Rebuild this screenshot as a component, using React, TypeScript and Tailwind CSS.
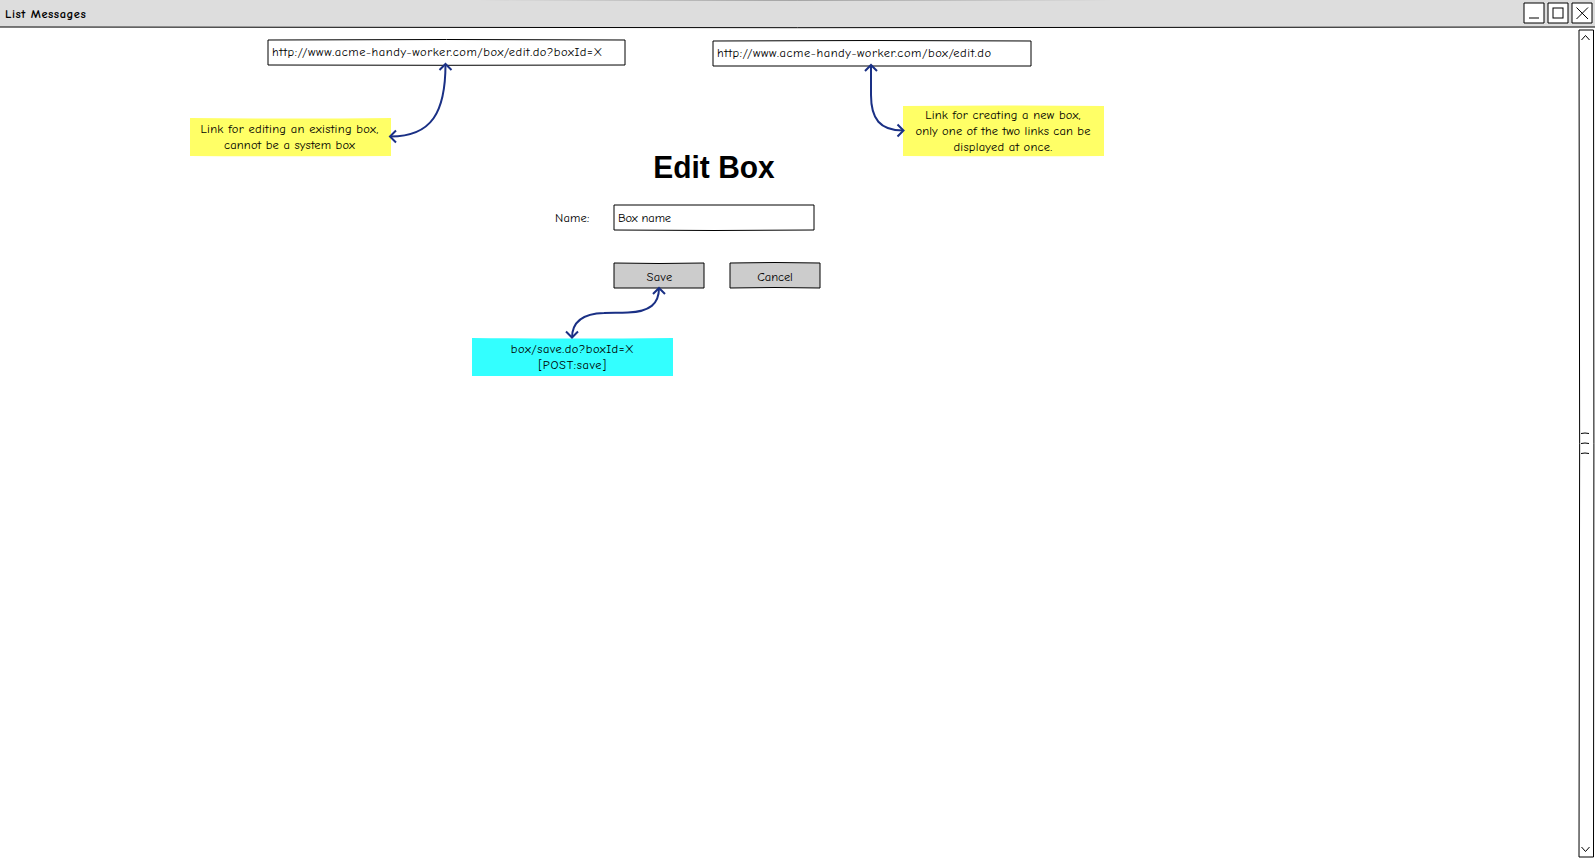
import type { ReactNode } from "react";

type FrameProps = {
  w: number;
  h: number;
  top?: number;
  bottom?: number;
  fill?: string;
  className?: string;
  stroke?: string;
  children?: ReactNode;
};

/* A box with a hand-drawn outline; top and bottom give how far each edge bows. */
function Frame({ w, h, top = 0, bottom = 0, fill = "#fff", stroke = "#000", className = "", children }: FrameProps) {
  return (
    <div className={`relative shrink-0 ${className}`} style={{ width: w, height: h }}>
      <svg className="absolute inset-0 overflow-visible" width={w} height={h}>
        <path d={`M0 0Q${w / 2} ${top * 2} ${w} 0V${h}Q${w / 2} ${h + bottom * 2} 0 ${h}Z`} fill={fill} stroke={stroke} />
      </svg>
      {children}
    </div>
  );
}

function TitleBar() {
  return (
    <header className="relative flex h-[27px] items-start justify-between bg-[#ddd] pr-[3px] pl-[5px]">
      <h1 className="pt-[5px] leading-[18px] font-bold tracking-[0.5px]">List Messages</h1>
      <svg className="absolute top-0 left-0 overflow-visible" width="1595" height="28">
        <path d="M0 27Q797 28.4 1595 27" fill="none" stroke="#000" />
        <path d="M0 -0.9Q797 0.4 1595 -0.9" fill="none" stroke="#000" />
      </svg>
      <div className="relative flex gap-1 pt-[3px]">
        <Frame w={20} h={20}>
          <svg className="relative" width="20" height="20" fill="none" stroke="#000"><path d="M5 15H15" /></svg>
        </Frame>
        <Frame w={20} h={20}>
          <svg className="relative" width="20" height="20" fill="none" stroke="#000"><rect x="5" y="5" width="10" height="10" /></svg>
        </Frame>
        <Frame w={20} h={20}>
          <svg className="relative" width="20" height="20" fill="none" stroke="#000"><path d="M4.500 4.500L16 16M16 4.500L4.500 16" /></svg>
        </Frame>
      </div>
    </header>
  );
}

function ScrollBar() {
  return (
    <svg className="absolute top-[3px] right-0 overflow-visible" width="16" height="828" fill="none" stroke="#000">
      <path d="M0 0H14.500Q15.300 414 14.500 827H0Q1.300 414 0 0Z" />
      <path d="M2.500 10L6.500 5.500L10.500 10M2.500 817L6.500 821.500L10.500 817" />
      <path d="M2 403.500Q6 402.500 10 403.500M2 413.500Q6 412.500 10 413.500M2 423.500Q6 422.500 10 423.500" />
    </svg>
  );
}

function Connectors() {
  return (
    <svg className="pointer-events-none absolute top-0 left-0 overflow-visible" width="1120" height="360" fill="none" stroke="#1a3085" strokeWidth="2">
      <path d="M445.500 37C445.500 85 432 109.500 390.500 109.500" />
      <path d="M439.500 43L445.500 37L451.500 43M396 103.500L390 109.500L396 115.500" />
      <path d="M871 38V68C871 92 880 103.500 903 103.500" />
      <path d="M865 44L871 38L877 44M897.500 97.500L903.500 103.500L897.500 109.500" />
      <path d="M659 261C659 277 650 284.500 628 285.500C618 286 612 285.500 604 286C584 286.500 572 294 572 311" />
      <path d="M653 267L659 261L665 267M566 304.500L572 310.500L578 304.500" />
    </svg>
  );
}

export default function App() {
  return (
    <div className="h-[859px] w-[1595px] overflow-hidden bg-white font-['Comic_Sans_MS','Comic_Neue','Open_Sans',sans-serif] text-[12.5px] leading-4 text-black">
      <TitleBar />
      <main className="relative h-[832px]">
        <div className="flex pt-[13px] pl-[268px]">
          <Frame w={357} h={25} top={-0.5} bottom={0.3}>
            <p className="relative pt-1 pl-1 tracking-[0.56px] whitespace-nowrap">http://www.acme-handy-worker.com/box/edit.do?boxId=X</p>
          </Frame>
          <Frame w={318} h={25} top={-0.5} className="mt-px ml-[88px]">
            <p className="relative pt-1 pl-1 tracking-[0.55px] whitespace-nowrap">http://www.acme-handy-worker.com/box/edit.do</p>
          </Frame>
        </div>

        <section className="ml-[555px] w-[270px] pt-[81px]">
          <h2 className="ml-[59px] w-[200px] scale-x-[0.935] text-center font-['Liberation_Sans',Arial,sans-serif] text-[32px] leading-[40px] font-bold whitespace-nowrap">Edit Box</h2>
          <div className="mt-[18px] flex">
            <label className="w-[59px] pt-[5px] tracking-[0.2px]">Name:</label>
            <Frame w={200} h={25} bottom={0.5}>
              <p className="relative pt-[5px] pl-1 tracking-[-0.14px]">Box name</p>
            </Frame>
          </div>
          <div className="mt-[33px] flex gap-[26px] pl-[59px]">
            <Frame w={90} h={25} top={0.5} fill="#ccc">
              <button className="relative block h-[27px] w-full pl-px text-center tracking-[0.4px]">Save</button>
            </Frame>
            <Frame w={90} h={25} top={-0.5} bottom={-0.5} fill="#ccc">
              <button className="relative block h-[27px] w-full text-center tracking-[-0.1px]">Cancel</button>
            </Frame>
          </div>
        </section>

        <div className="absolute top-[91px] left-[190px]">
          <Frame w={201} h={38} top={0.5} bottom={0.3} fill="#ff6" stroke="none">
            <p className="relative pt-[3px] pr-[2px] text-center tracking-[0.18px]"><span className="tracking-[0.31px]">Link for editing an existing box,</span><br />cannot be a system box</p>
          </Frame>
        </div>
        <div className="absolute top-[79px] left-[903px]">
          <Frame w={201} h={50} top={-0.5} bottom={0.3} fill="#ff6" stroke="none">
            <p className="relative pt-[1px] pr-px text-center tracking-[0.23px]">Link for creating a new box,<br /><span className="tracking-[0.13px]">only one of the two links can be</span><br />displayed at once.</p>
          </Frame>
        </div>
        <div className="absolute top-[311px] left-[472px]">
          <Frame w={201} h={38} top={0.5} fill="#3ff" stroke="none">
            <p className="relative pt-[3px] text-center tracking-[0.52px]">box/save.do?boxId=X<br /><span className="tracking-[0.65px]">[POST:save]</span></p>
          </Frame>
        </div>
        <Connectors />
        <ScrollBar />
      </main>
    </div>
  );
}
